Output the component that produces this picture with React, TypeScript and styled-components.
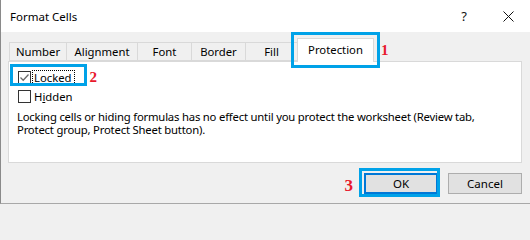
import React from "react";
import styled, { createGlobalStyle } from "styled-components";

const GlobalStyle = createGlobalStyle`
  html, body {
    margin: 0;
    padding: 0;
    background: #f0f0f0;
  }
  body {
    font-family: "Noto Sans", "Liberation Sans", sans-serif;
    font-size: 11.3px;
    color: #000;
  }
`;

const ANNOTATION_BLUE = "#00a2e8";
const ANNOTATION_RED = "#e8192c";

const Dialog = styled.div`
  width: 530px;
  height: 204px;
  box-sizing: border-box;
  display: flex;
  flex-direction: column;
  background: #f0f0f0;
  border-left: 1px solid #8a8a8a;
  border-bottom: 1px solid #a8a8a8;
`;

const TitleBar = styled.div`
  flex: none;
  height: 32px;
  display: flex;
  align-items: center;
  background: #fff;
  padding-left: 9px;
`;

const Title = styled.span`
  flex: 1;
  font-size: 11.5px;
`;

const TitleButton = styled.div`
  width: 44px;
  height: 32px;
  display: flex;
  align-items: center;
  justify-content: center;
  font-size: 13px;
  color: #111;
`;

const Body = styled.div`
  flex: 1;
  display: flex;
  flex-direction: column;
  padding: 0 8px 0 7px;
`;

const TabStrip = styled.div`
  height: 29px;
  display: flex;
  align-items: flex-end;
  padding-left: 1px;
`;

const Tab = styled.div<{ $w: number; $active?: boolean }>`
  width: ${(p) => p.$w}px;
  height: ${(p) => (p.$active ? 24 : 19)}px;
  box-sizing: border-box;
  margin-left: -1px;
  margin-bottom: ${(p) => (p.$active ? -1 : 0)}px;
  display: flex;
  align-items: center;
  justify-content: center;
  border: 1px solid #d9d9d9;
  border-bottom: ${(p) => (p.$active ? "none" : "1px solid #d9d9d9")};
  background: ${(p) => (p.$active ? "#fff" : "#f0f0f0")};
  position: relative;
  z-index: ${(p) => (p.$active ? 2 : 0)};
  padding-bottom: ${(p) => (p.$active ? 2 : 0)}px;
  outline: ${(p) => (p.$active ? `3px solid ${ANNOTATION_BLUE}` : "none")};
  outline-offset: 3px;

  &:first-child {
    margin-left: 0;
  }
`;

const Marker = styled.span<{ $size: number }>`
  font-family: "Liberation Serif", "Times New Roman", serif;
  font-weight: bold;
  font-size: ${(p) => p.$size}px;
  line-height: 1;
  color: ${ANNOTATION_RED};
`;

const TabMarker = styled(Marker)`
  align-self: center;
  margin: 8px 0 0 7px;
`;

const Panel = styled.div`
  height: 102px;
  box-sizing: border-box;
  background: #fff;
  border: 1px solid #d9d9d9;
  padding-top: 8px;
  display: flex;
  flex-direction: column;
`;

const CheckRow = styled.div<{ $boxed?: boolean }>`
  position: relative;
  height: 15px;
  display: flex;
  align-items: center;
  padding-left: 9px;
  margin-bottom: 4px;

  ${(p) =>
    p.$boxed &&
    `
    &::after {
      content: "";
      position: absolute;
      left: 1px;
      top: -6px;
      width: 77px;
      height: 22px;
      box-sizing: border-box;
      border: 3px solid ${ANNOTATION_BLUE};
      pointer-events: none;
    }
  `}
`;

const Box = styled.span`
  width: 13px;
  height: 13px;
  box-sizing: border-box;
  border: 1px solid #333;
  background: #fff;
  display: flex;
  align-items: center;
  justify-content: center;
`;

const Label = styled.span<{ $focused?: boolean }>`
  margin-left: 1px;
  padding: 0 2px 0 1px;
  line-height: 13px;
  border: 1px dotted ${(p) => (p.$focused ? "#000" : "transparent")};
`;

const RowMarker = styled(Marker)`
  margin-left: 15px;
`;

const Note = styled.p`
  margin: 2px 0 0;
  padding-left: 8px;
  line-height: 13px;
  letter-spacing: -0.2px;
  white-space: nowrap;
`;

const Footer = styled.div`
  display: flex;
  justify-content: flex-end;
  align-items: center;
  padding-top: 10px;
  gap: 10px;
`;

const FooterMarker = styled(Marker)`
  margin-right: 1px;
  margin-top: 3px;
`;

const Button = styled.button<{ $default?: boolean }>`
  position: relative;
  width: 74px;
  height: 21px;
  box-sizing: border-box;
  background: #e1e1e1;
  border: ${(p) => (p.$default ? "2px solid #0078d7" : "1px solid #adadad")};
  font-family: inherit;
  font-size: 11.5px;
  color: #000;
  padding: 0;

  ${(p) =>
    p.$default &&
    `
    &::after {
      content: "";
      position: absolute;
      left: -7px;
      top: -7px;
      right: -4px;
      bottom: -5px;
      border: 3px solid ${ANNOTATION_BLUE};
      pointer-events: none;
    }
  `}
`;

const CheckMark = () => (
  <svg width="11" height="11" viewBox="0 0 11 11">
    <polyline
      points="1.5,5.5 4.2,8.2 9.5,2.5"
      fill="none"
      stroke="#6b6b6b"
      strokeWidth="1.3"
    />
  </svg>
);

const CloseIcon = () => (
  <svg width="11" height="11" viewBox="0 0 11 11">
    <path d="M0.5 0.5 L10.5 10.5 M10.5 0.5 L0.5 10.5" stroke="#111" strokeWidth="1" />
  </svg>
);

const tabs = [
  { label: "Number", w: 58 },
  { label: "Alignment", w: 72 },
  { label: "Font", w: 55 },
  { label: "Border", w: 55 },
  { label: "Fill", w: 53 },
  { label: "Protection", w: 77, active: true },
];

export default function App() {
  return (
    <>
      <GlobalStyle />
      <Dialog>
        <TitleBar>
          <Title>Format Cells</Title>
          <TitleButton>?</TitleButton>
          <TitleButton>
            <CloseIcon />
          </TitleButton>
        </TitleBar>
        <Body>
          <TabStrip>
            {tabs.map((t) => (
              <Tab key={t.label} $w={t.w} $active={t.active}>
                {t.label}
              </Tab>
            ))}
            <TabMarker $size={15}>1</TabMarker>
          </TabStrip>
          <Panel>
            <CheckRow $boxed>
              <Box>
                <CheckMark />
              </Box>
              <Label $focused>
                <u>L</u>ocked
              </Label>
              <RowMarker $size={15}>2</RowMarker>
            </CheckRow>
            <CheckRow>
              <Box />
              <Label>
                H<u>i</u>dden
              </Label>
            </CheckRow>
            <Note>
              Locking cells or hiding formulas has no effect until you protect the worksheet (Review tab,
              <br />
              Protect group, Protect Sheet button).
            </Note>
          </Panel>
          <Footer>
            <FooterMarker $size={17}>3</FooterMarker>
            <Button $default>OK</Button>
            <Button>Cancel</Button>
          </Footer>
        </Body>
      </Dialog>
    </>
  );
}
